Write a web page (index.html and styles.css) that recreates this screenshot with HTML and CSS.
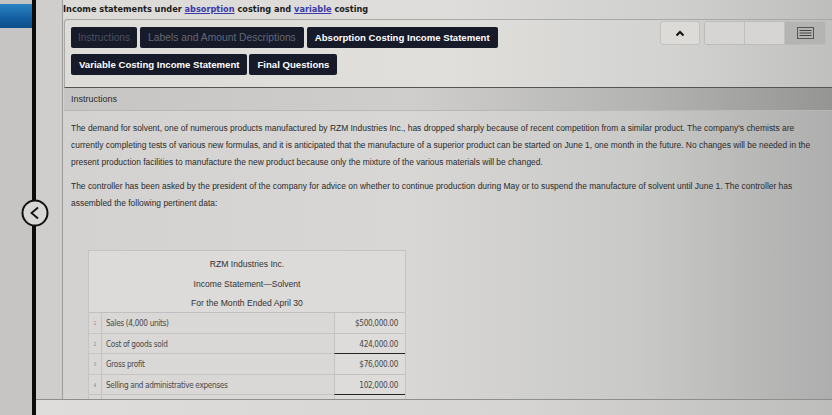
FILE: index.html
```html
<!DOCTYPE html>
<html>
<head>
<meta charset="utf-8">
<link rel="stylesheet" href="styles.css">
</head>
<body>
<div class="rail"><div class="bluebar"></div></div>
<div class="spine"></div>
<div class="back"><svg width="28" height="28" viewBox="0 0 28 28"><circle cx="14" cy="14" r="12.5" fill="#d8d8d6" stroke="#111" stroke-width="2"/><path d="M17 8.5 L10.5 14 L17 19.5" fill="none" stroke="#111" stroke-width="1.8"/></svg></div>
<div class="right">
  <div class="upper">
    <div class="gutter"></div>
    <div class="main">
      <div class="title">Income statements under <a>absorption</a> costing and <a>variable</a> costing</div>
      <div class="tabbox">
        <div class="tabs">
          <div class="row">
            <span class="tab dim">Instructions</span>
            <span class="tab dim2">Labels and Amount Descriptions</span>
            <span class="tab">Absorption Costing Income Statement</span>
          </div>
          <div class="row">
            <span class="tab">Variable Costing Income Statement</span>
            <span class="tab">Final Questions</span>
          </div>
        </div>
        <div class="controls">
          <span class="ctl up"><svg width="10" height="7" viewBox="0 0 10 7"><path d="M1.5 5.5 L5 2 L8.5 5.5" fill="none" stroke="#111" stroke-width="2"/></svg></span>
          <span class="group">
            <span class="seg"></span><span class="seg"></span><span class="seg dark"><svg width="17" height="12" viewBox="0 0 17 12"><rect x="0.5" y="0.5" width="16" height="11" fill="none" stroke="#555" stroke-width="1"/><path d="M2.5 3.5 H14.5 M2.5 6 H14.5 M2.5 8.5 H14.5" stroke="#444" stroke-width="1.2"/></svg></span>
          </span>
        </div>
      </div>
      <div class="panelhead">Instructions</div>
      <div class="body">
        <p>The demand for solvent, one of numerous products manufactured by RZM Industries Inc., has dropped sharply because of recent competition from a similar product. The company's chemists are currently completing tests of various new formulas, and it is anticipated that the manufacture of a superior product can be started on June 1, one month in the future. No changes will be needed in the present production facilities to manufacture the new product because only the mixture of the various materials will be changed.</p>
        <p>The controller has been asked by the president of the company for advice on whether to continue production during May or to suspend the manufacture of solvent until June 1. The controller has assembled the following pertinent data:</p>
        <div class="stmt">
          <div class="shead">
            <div>RZM Industries Inc.</div>
            <div>Income Statement—Solvent</div>
            <div>For the Month Ended April 30</div>
          </div>
          <div class="srow"><span class="num">1</span><span class="lbl">Sales (4,000 units)</span><span class="amt">$500,000.00</span></div>
          <div class="srow"><span class="num">2</span><span class="lbl">Cost of goods sold</span><span class="amt under">424,000.00</span></div>
          <div class="srow"><span class="num">3</span><span class="lbl">Gross profit</span><span class="amt">$76,000.00</span></div>
          <div class="srow"><span class="num">4</span><span class="lbl">Selling and administrative expenses</span><span class="amt under">102,000.00</span></div>
          <div class="srow"><span class="num"></span><span class="lbl"></span><span class="amt"></span></div>
        </div>
      </div>
    </div>
  </div>
  <div class="bottom"></div>
</div>
</body>
</html>
```

FILE: styles.css
```css
html, body {
  margin: 0;
  padding: 0;
}
body {
  width: 832px;
  height: 415px;
  overflow: hidden;
  display: flex;
  position: relative;
  background: #c9c8c6;
  font-family: "Liberation Sans", Arial, sans-serif;
}
.rail {
  width: 32px;
  flex: none;
  background: #c6c5c3;
  padding-top: 4px;
}
.bluebar {
  height: 24px;
  background: linear-gradient(#2a83c4, #125ea0 60%, #0e4f8c);
}
.spine {
  width: 4px;
  flex: none;
  background: #0c0c0c;
}
.back {
  position: absolute;
  left: 21px;
  top: 199px;
  width: 28px;
  height: 28px;
}
.back svg { display: block; }
.right {
  flex: 1;
  display: flex;
  flex-direction: column;
}
.upper {
  height: 400px;
  display: flex;
  border-bottom: 1px solid #8e8e8c;
  box-sizing: border-box;
}
.bottom {
  flex: 1;
  background: linear-gradient(90deg, #dedddb, #d6d5d3 60%, #bdbdbb);
}
.gutter {
  width: 26px;
  flex: none;
  background: #cfcecc;
  border-right: 1px solid #9c9c9a;
}
.main {
  flex: 1;
  overflow: hidden;
  background: linear-gradient(90deg, #d3d2d0 0%, #d8d7d5 45%, #c9c9c7 75%, #adaead 100%);
}
.title {
  font-family: "DejaVu Sans", Verdana, sans-serif;
  font-weight: bold;
  font-size: 8.2px;
  color: #1c1c1c;
  height: 19px;
  line-height: 19px;
  background: linear-gradient(90deg, #dcdbd8, #dedddb 50%, #cfcfcd 80%, #bebebc);
}
.title a {
  color: #3a3aa8;
  text-decoration: underline;
}
.tabbox {
  margin-left: 1px;
  height: 69px;
  box-sizing: border-box;
  border: 1px solid #a8a8a6;
  border-right: none;
  border-bottom: 1px solid #555;
  border-top-left-radius: 4px;
  background: linear-gradient(90deg, #dddcd9, #e0dfdc 50%, #d2d2d0 80%, #c0c0be);
  display: flex;
  padding: 7px 6px 0 6px;
}
.tabs {
  flex: 1;
  display: flex;
  flex-direction: column;
  gap: 6px;
}
.row {
  display: flex;
  gap: 3px;
}
.tab {
  background: #161a29;
  color: #fff;
  font-weight: bold;
  font-size: 9.6px;
  height: 21px;
  line-height: 21px;
  padding: 0 8px;
  border-radius: 2px;
  white-space: nowrap;
}
.tab.dim {
  color: #4c5162;
  font-weight: normal;
  font-size: 10.2px;
  padding: 0 7px;
}
.tab.dim2 {
  color: #636878;
  font-weight: normal;
  font-size: 10.3px;
}
.row + .row {
  gap: 2px;
}
.controls {
  display: flex;
  gap: 4px;
  margin-top: -6px;
}
.ctl, .seg {
  height: 24px;
  box-sizing: border-box;
  display: flex;
  align-items: center;
  justify-content: center;
}
.ctl {
  width: 40px;
  border: 1px solid #c2c2c0;
  border-radius: 3px;
  background: #dcdbd8;
}
.group {
  display: flex;
  border: 1px solid #bcbcba;
  border-radius: 3px;
  overflow: hidden;
  height: 24px;
  box-sizing: border-box;
}
.seg {
  width: 40px;
  height: 22px;
  background: #d6d5d3;
  border-right: 1px solid #c0c0be;
}
.seg.dark {
  background: #b4b4b2;
  border-right: none;
}
.panelhead {
  margin-left: 1px;
  height: 22px;
  line-height: 22px;
  padding-left: 7px;
  font-size: 9px;
  color: #2a2a2a;
  background: linear-gradient(90deg, #c6c5c3, #cfcecc 45%, #b4b4b2 75%, #959694);
  border-bottom: 1px solid #b8b8b6;
}
.body {
  padding: 9px 8px 0 8px;
  font-size: 8.45px;
  color: #2b2b2b;
}
.body p {
  margin: 0 0 7px 0;
  line-height: 17px;
}
.stmt {
  margin-top: 38px;
  margin-left: 17px;
  width: 316px;
  border: 1px solid #c4c4c2;
  border-bottom: none;
  background: #d9d8d6;
}
.shead {
  height: 62px;
  background: #dcdbd9;
  text-align: center;
  font-size: 8.6px;
  color: #333;
  padding-top: 5px;
  box-sizing: border-box;
  border-bottom: 1px solid #c0c0be;
}
.shead div {
  height: 19.5px;
  line-height: 16px;
}
.srow {
  display: flex;
  height: 20.5px;
  border-bottom: 1px solid #c4c4c2;
  box-sizing: border-box;
  font-family: "DejaVu Sans Condensed", "Liberation Sans Narrow", sans-serif;
  font-stretch: condensed;
  font-size: 8.2px;
  letter-spacing: -0.35px;
  color: #4a4a4a;
}
.num {
  width: 12px;
  flex: none;
  font-size: 5px;
  letter-spacing: 0;
  color: #8a8a8a;
  text-align: center;
  line-height: 20px;
}
.lbl {
  flex: 1;
  border-left: 1px solid #c4c4c2;
  padding-left: 4px;
  line-height: 20px;
}
.amt {
  width: 71px;
  flex: none;
  box-sizing: border-box;
  border-left: 1px solid #c4c4c2;
  text-align: right;
  padding-right: 7px;
  line-height: 20px;
  background: #dddcda;
}
.amt.under {
  border-bottom: 1.5px solid #222;
  margin-bottom: -1px;
}
```
